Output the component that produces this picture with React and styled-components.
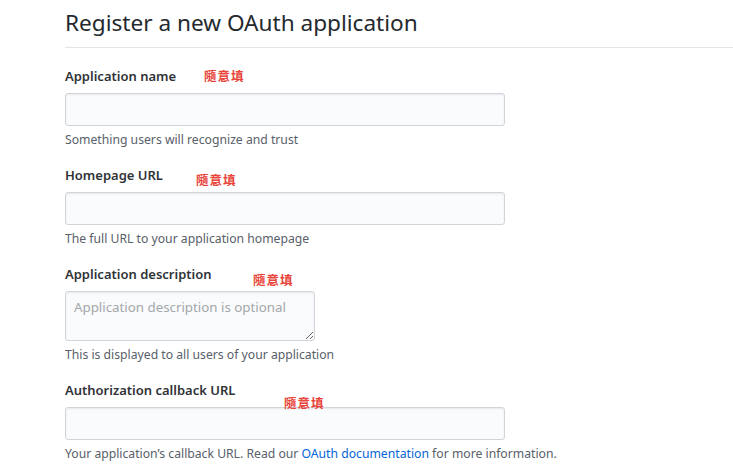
import React from 'react';
import styled, { createGlobalStyle } from 'styled-components';

const GlobalStyle = createGlobalStyle`
  body {
    margin: 0;
    background: #fff;
    font-family: "Noto Sans", "Open Sans", "Liberation Sans", "Noto Sans CJK TC", sans-serif;
    color: #24292e;
  }
`;

const Page = styled.div`
  padding-left: 65px;
  width: 668px;
`;

const Subhead = styled.div`
  border-bottom: 1px solid #e1e4e8;
  height: 48px;
  box-sizing: border-box;
  padding-top: 6px;
`;

const Heading = styled.h2`
  margin: 0;
  font-size: 22.6px;
  font-weight: 400;
  line-height: 34px;
  color: #24292e;
`;

const Form = styled.form`
  padding-top: 18px;
  display: flex;
  flex-direction: column;
  gap: 16px;
`;

const Group = styled.div`
  position: relative;
  display: flex;
  flex-direction: column;
  align-items: flex-start;
`;

const Label = styled.label`
  font-size: 13px;
  font-weight: 600;
  line-height: 20px;
  margin-bottom: 7px;
  color: #2f3337;
`;

const Annotation = styled.span`
  position: absolute;
  left: ${p => p.$left}px;
  top: ${p => p.$top}px;
  font-family: "Noto Sans CJK TC", sans-serif;
  font-size: 12.5px;
  font-weight: 700;
  line-height: 20px;
  letter-spacing: 1px;
  color: #e8443a;
`;

const Input = styled.input`
  box-sizing: border-box;
  width: 440px;
  height: 33px;
  padding: 6px 8px;
  font: inherit;
  font-size: 14px;
  background: #fafbfc;
  border: 1px solid #d1d5da;
  border-radius: 3px;
  box-shadow: inset 0 1px 2px rgba(27, 31, 35, 0.075);
  outline: none;
`;

const TextArea = styled.textarea`
  box-sizing: border-box;
  width: 250px;
  height: 50px;
  padding: 5px 8px;
  font: inherit;
  font-size: 13.3px;
  line-height: 20px;
  background: #fafbfc;
  border: 1px solid #d1d5da;
  border-radius: 3px;
  box-shadow: inset 0 1px 2px rgba(27, 31, 35, 0.075);
  outline: none;
  &::placeholder {
    color: #a3a7ab;
  }
`;

const Note = styled.p`
  margin: 5px 0 0;
  font-size: 12.2px;
  line-height: 18px;
  color: #586069;
`;

const DocLink = styled.a`
  color: #0366d6;
  text-decoration: none;
`;

const fields = [
  { label: 'Application name', note: 'Something users will recognize and trust', ann: [139, 0] },
  { label: 'Homepage URL', note: 'The full URL to your application homepage', ann: [131, 5] },
  { label: 'Application description', note: 'This is displayed to all users of your application', ann: [188, 6], area: true },
  { label: 'Authorization callback URL', ann: [219, 13], link: true },
];

export default function App() {
  return (
    <>
      <GlobalStyle />
      <Page>
        <Subhead>
          <Heading>Register a new OAuth application</Heading>
        </Subhead>
        <Form>
          {fields.map(f => (
            <Group key={f.label}>
              <Label>{f.label}</Label>
              <Annotation $left={f.ann[0]} $top={f.ann[1]}>隨意填</Annotation>
              {f.area ? (
                <TextArea placeholder="Application description is optional" />
              ) : (
                <Input type="text" />
              )}
              <Note>
                {f.link ? (
                  <>
                    Your application’s callback URL. Read our{' '}
                    <DocLink href="#">OAuth documentation</DocLink> for more information.
                  </>
                ) : (
                  f.note
                )}
              </Note>
            </Group>
          ))}
        </Form>
      </Page>
    </>
  );
}
